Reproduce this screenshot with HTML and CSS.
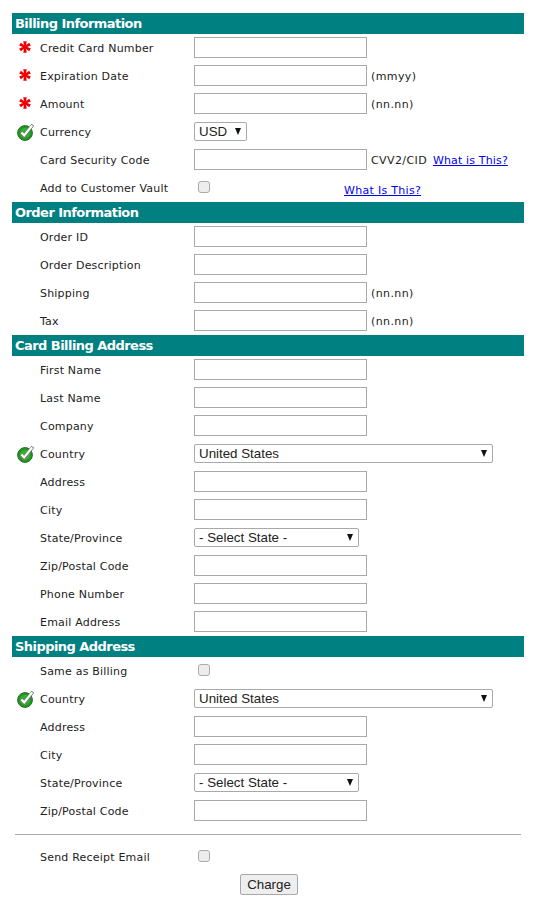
FILE: index.html
```html
<!DOCTYPE html>
<html lang="en">
<head>
    <meta charset="UTF-8">
    <meta name="viewport" content="width=device-width, initial-scale=1.0">
    <title>Charge</title>
    <link rel="stylesheet" href="styles.css">
</head>
<body>
    <svg class="sprites" width="0" height="0">
        <symbol id="star" viewBox="0 0 12 12">
            <path d="M4.3 0.2H7.7L7.1 4.1 10.17 1.63 11.87 4.57 8.2 6 11.87 7.43 10.17 10.37 7.1 7.9 7.7 11.8H4.3L4.9 7.9 1.83 10.37 0.13 7.43 3.8 6 0.13 4.57 1.83 1.63 4.9 4.1z" fill="#f00000"/>
        </symbol>
        <symbol id="ok" viewBox="0 0 18 18">
            <circle cx="8" cy="10" r="7.4" fill="#1f9a1f" stroke="#2a6b2a" stroke-width="1"/>
            <circle cx="8" cy="10" r="5" fill="#35b035"/>
            <path d="M3.8 9.2l3.4 3.6 8.6-11" fill="none" stroke="#777" stroke-width="3.4"/>
            <path d="M4.4 9.4l2.8 3 8-10" fill="none" stroke="#fff" stroke-width="2.2"/>
        </symbol>
    </svg>

    <form class="payment-form">
        <h2 class="section-title">Billing Information</h2>
        <div class="row"><span class="mark"><svg class="star"><use href="#star"/></svg></span><label>Credit Card Number</label><input type="text" class="input-field"></div>
        <div class="row"><span class="mark"><svg class="star"><use href="#star"/></svg></span><label>Expiration Date</label><input type="text" class="input-field"><span class="hint">(mmyy)</span></div>
        <div class="row"><span class="mark"><svg class="star"><use href="#star"/></svg></span><label>Amount</label><input type="text" class="input-field"><span class="hint">(nn.nn)</span></div>
        <div class="row"><span class="mark"><svg class="ok"><use href="#ok"/></svg></span><label>Currency</label><span class="select-box currency">USD</span></div>
        <div class="row"><span class="mark"></span><label>Card Security Code</label><input type="text" class="input-field"><span class="hint">CVV2/CID <a href="#">What is This?</a></span></div>
        <div class="row"><span class="mark"></span><label>Add to Customer Vault</label><input type="checkbox" class="check"><a href="#" class="vault-link">What Is This?</a></div>

        <h2 class="section-title">Order Information</h2>
        <div class="row"><span class="mark"></span><label>Order ID</label><input type="text" class="input-field"></div>
        <div class="row"><span class="mark"></span><label>Order Description</label><input type="text" class="input-field"></div>
        <div class="row"><span class="mark"></span><label>Shipping</label><input type="text" class="input-field"><span class="hint">(nn.nn)</span></div>
        <div class="row"><span class="mark"></span><label>Tax</label><input type="text" class="input-field"><span class="hint">(nn.nn)</span></div>

        <h2 class="section-title">Card Billing Address</h2>
        <div class="row"><span class="mark"></span><label>First Name</label><input type="text" class="input-field"></div>
        <div class="row"><span class="mark"></span><label>Last Name</label><input type="text" class="input-field"></div>
        <div class="row"><span class="mark"></span><label>Company</label><input type="text" class="input-field"></div>
        <div class="row"><span class="mark"><svg class="ok"><use href="#ok"/></svg></span><label>Country</label><span class="select-box country">United States</span></div>
        <div class="row"><span class="mark"></span><label>Address</label><input type="text" class="input-field"></div>
        <div class="row"><span class="mark"></span><label>City</label><input type="text" class="input-field"></div>
        <div class="row"><span class="mark"></span><label>State/Province</label><span class="select-box state">- Select State -</span></div>
        <div class="row"><span class="mark"></span><label>Zip/Postal Code</label><input type="text" class="input-field"></div>
        <div class="row"><span class="mark"></span><label>Phone Number</label><input type="text" class="input-field"></div>
        <div class="row"><span class="mark"></span><label>Email Address</label><input type="text" class="input-field"></div>

        <h2 class="section-title">Shipping Address</h2>
        <div class="row"><span class="mark"></span><label>Same as Billing</label><input type="checkbox" class="check"></div>
        <div class="row"><span class="mark"><svg class="ok"><use href="#ok"/></svg></span><label>Country</label><span class="select-box country">United States</span></div>
        <div class="row"><span class="mark"></span><label>Address</label><input type="text" class="input-field"></div>
        <div class="row"><span class="mark"></span><label>City</label><input type="text" class="input-field"></div>
        <div class="row"><span class="mark"></span><label>State/Province</label><span class="select-box state">- Select State -</span></div>
        <div class="row"><span class="mark"></span><label>Zip/Postal Code</label><input type="text" class="input-field"></div>

        <hr class="divider">

        <div class="row"><span class="mark"></span><label>Send Receipt Email</label><input type="checkbox" class="check"></div>
        <div class="actions"><button type="button" class="charge-button">Charge</button></div>
    </form>
</body>
</html>
```

FILE: styles.css
```css
body {
    margin: 0;
    padding: 13px 13px 0 12px;
    background-color: #ffffff;
    color: #222;
    font-family: "DejaVu Sans", Verdana, sans-serif;
    font-size: 11px;
}
.sprites {
    position: absolute;
}
.section-title {
    margin: 0;
    height: 21px;
    line-height: 21px;
    padding-left: 3px;
    background-color: #008080;
    color: white;
    font-size: 13px;
    font-weight: bold;
    letter-spacing: -0.55px;
}
.row {
    display: flex;
    align-items: center;
    height: 28px;
}
.mark {
    width: 28px;
    flex: none;
    display: flex;
    justify-content: center;
    padding-right: 2px;
    box-sizing: border-box;
}
.star {
    width: 12px;
    height: 12px;
    margin-top: -2px;
}
.ok {
    width: 18px;
    height: 18px;
    margin-left: 2px;
}
.row label {
    width: 154px;
    flex: none;
    letter-spacing: 0.2px;
}
.input-field {
    width: 173px;
    height: 21px;
    margin: -1px 0 0;
    padding: 0;
    box-sizing: border-box;
    border: 1px solid #a9a9a9;
    background-color: white;
}
.hint {
    margin-left: 4px;
    letter-spacing: 0.4px;
}
a {
    color: #0000ee;
    letter-spacing: 0.3px;
}
.hint a {
    margin-left: 2px;
    letter-spacing: 0.15px;
}
.vault-link {
    margin-left: 134px;
    margin-top: 4px;
}
.check {
    appearance: none;
    width: 12px;
    height: 12px;
    margin: -2px 0 0 4px;
    box-sizing: border-box;
    border: 1px solid #ababab;
    border-radius: 3px;
    background-color: #ededed;
}
.select-box {
    position: relative;
    height: 19px;
    margin-top: -1px;
    line-height: 17px;
    padding-left: 4px;
    box-sizing: border-box;
    border: 1px solid #a9a9a9;
    border-radius: 2px;
    background-color: white;
    font-family: "Liberation Sans", Arial, sans-serif;
    font-size: 13.33px;
}
.select-box::after {
    content: "";
    position: absolute;
    right: 5px;
    top: 5px;
    border-left: 3.5px solid transparent;
    border-right: 3.5px solid transparent;
    border-top: 7px solid #111;
}
.currency {
    width: 53px;
}
.country {
    width: 299px;
}
.state {
    width: 165px;
}
.divider {
    margin: 9px 3px 8px;
    border: none;
    border-top: 1px solid #a9a9a9;
}
.actions {
    display: flex;
    justify-content: center;
    margin-top: 3px;
    padding-left: 2px;
}
.charge-button {
    width: 58px;
    height: 21px;
    padding: 0;
    border: 1px solid #a9a9a9;
    border-radius: 2px;
    background-color: #eeeeee;
    color: #222;
    font-family: "Liberation Sans", Arial, sans-serif;
    font-size: 13.33px;
}
```
